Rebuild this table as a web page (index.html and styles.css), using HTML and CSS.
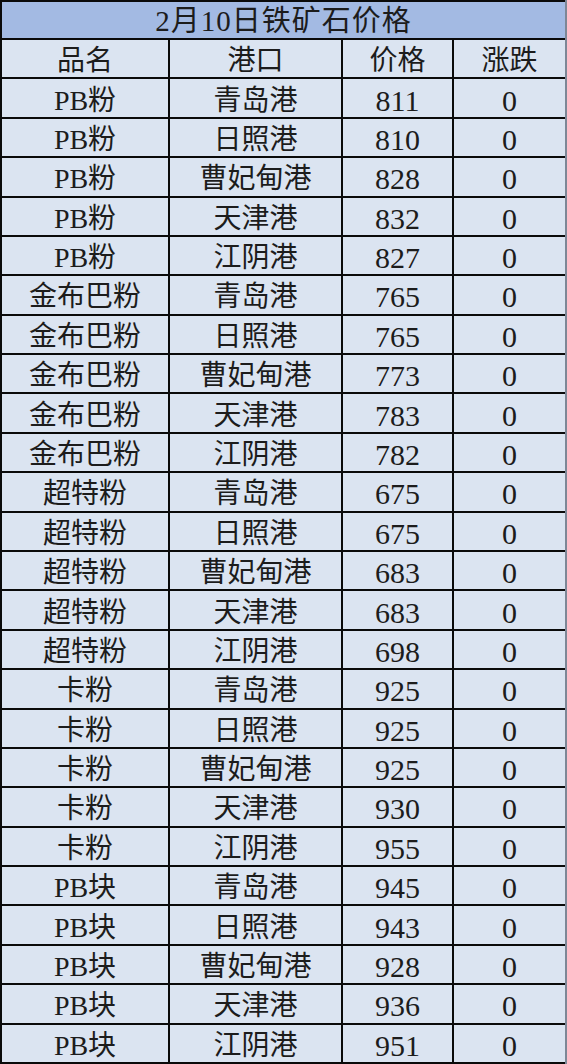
FILE: index.html
```html
<!DOCTYPE html>
<html lang="zh-CN">
<head>
<meta charset="utf-8">
<title>2月10日铁矿石价格</title>
<link rel="stylesheet" href="styles.css">
</head>
<body>
<div class="sheet">
  <div class="title">2月10日铁矿石价格</div>
  <div class="c">品名</div><div class="c">港口</div><div class="c">价格</div><div class="c">涨跌</div>
  <div class="c">PB粉</div><div class="c">青岛港</div><div class="c n">811</div><div class="c n">0</div>
  <div class="c">PB粉</div><div class="c">日照港</div><div class="c n">810</div><div class="c n">0</div>
  <div class="c">PB粉</div><div class="c">曹妃甸港</div><div class="c n">828</div><div class="c n">0</div>
  <div class="c">PB粉</div><div class="c">天津港</div><div class="c n">832</div><div class="c n">0</div>
  <div class="c">PB粉</div><div class="c">江阴港</div><div class="c n">827</div><div class="c n">0</div>
  <div class="c">金布巴粉</div><div class="c">青岛港</div><div class="c n">765</div><div class="c n">0</div>
  <div class="c">金布巴粉</div><div class="c">日照港</div><div class="c n">765</div><div class="c n">0</div>
  <div class="c">金布巴粉</div><div class="c">曹妃甸港</div><div class="c n">773</div><div class="c n">0</div>
  <div class="c">金布巴粉</div><div class="c">天津港</div><div class="c n">783</div><div class="c n">0</div>
  <div class="c">金布巴粉</div><div class="c">江阴港</div><div class="c n">782</div><div class="c n">0</div>
  <div class="c">超特粉</div><div class="c">青岛港</div><div class="c n">675</div><div class="c n">0</div>
  <div class="c">超特粉</div><div class="c">日照港</div><div class="c n">675</div><div class="c n">0</div>
  <div class="c">超特粉</div><div class="c">曹妃甸港</div><div class="c n">683</div><div class="c n">0</div>
  <div class="c">超特粉</div><div class="c">天津港</div><div class="c n">683</div><div class="c n">0</div>
  <div class="c">超特粉</div><div class="c">江阴港</div><div class="c n">698</div><div class="c n">0</div>
  <div class="c">卡粉</div><div class="c">青岛港</div><div class="c n">925</div><div class="c n">0</div>
  <div class="c">卡粉</div><div class="c">日照港</div><div class="c n">925</div><div class="c n">0</div>
  <div class="c">卡粉</div><div class="c">曹妃甸港</div><div class="c n">925</div><div class="c n">0</div>
  <div class="c">卡粉</div><div class="c">天津港</div><div class="c n">930</div><div class="c n">0</div>
  <div class="c">卡粉</div><div class="c">江阴港</div><div class="c n">955</div><div class="c n">0</div>
  <div class="c">PB块</div><div class="c">青岛港</div><div class="c n">945</div><div class="c n">0</div>
  <div class="c">PB块</div><div class="c">日照港</div><div class="c n">943</div><div class="c n">0</div>
  <div class="c">PB块</div><div class="c">曹妃甸港</div><div class="c n">928</div><div class="c n">0</div>
  <div class="c">PB块</div><div class="c">天津港</div><div class="c n">936</div><div class="c n">0</div>
  <div class="c">PB块</div><div class="c">江阴港</div><div class="c n">951</div><div class="c n">0</div>
</div>
</body>
</html>
```
FILE: styles.css
```css
html, body {
  margin: 0;
  padding: 0;
  background: #dbe4f1;
}
.sheet {
  box-sizing: border-box;
  width: 567px;
  height: 1064px;
  display: grid;
  grid-template-columns: 166px 171px 109px minmax(0, 1fr);
  grid-template-rows: 36px repeat(26, minmax(0, 1fr));
  gap: 2px;
  padding: 2px 0 2px 2px;
  border-right: 2px solid #7d8796;
  background: #0a0a0a;
  font-family: "Liberation Serif", "Noto Sans CJK SC", serif;
  color: #1c1c1c;
  line-height: 1;
  overflow: hidden;
}
.title {
  grid-column: 1 / -1;
  background: #a3bae3;
  display: flex;
  align-items: center;
  justify-content: center;
  font-size: 29px;
  letter-spacing: 1px;
  padding-top: 3px;
}
.c {
  background: #dbe4f1;
  display: flex;
  align-items: center;
  justify-content: center;
  font-size: 28px;
  padding-top: 5px;
  min-height: 0;
  overflow: hidden;
}
.n {
  font-size: 30px;
}
```
